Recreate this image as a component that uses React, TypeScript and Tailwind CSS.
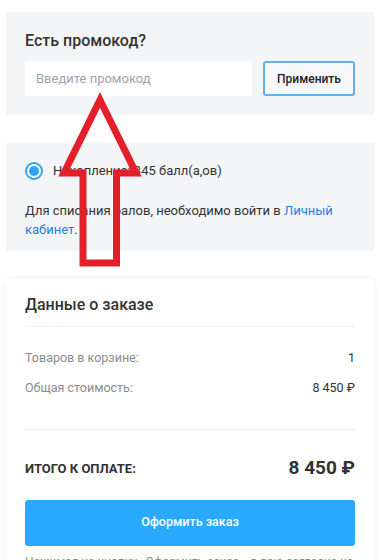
import React from 'react';

export default function App() {
  return (
    <div className="relative min-h-screen bg-white text-[#333] overflow-hidden" style={{ fontFamily: 'Roboto, "Liberation Sans", sans-serif' }}>
      <div className="px-[6px] pt-[12px]">
        {/* Promo code */}
        <div className="bg-[#f4f5f7] px-[19px] pt-[19px] pb-[19px]">
          <h3 className="text-[16px] leading-[20px] font-medium text-[#333]">Есть промокод?</h3>
          <div className="mt-[10px] flex gap-[11px]">
            <input
              className="h-[35px] w-[227px] bg-white rounded-[2px] px-[11px] text-[13px] outline-none placeholder:text-[#a0a4ab]"
              placeholder="Введите промокод"
            />
            <button className="h-[35px] w-[92px] rounded-[3px] border-2 border-[#62b2ea] bg-[#f7f8fa] text-[12px] font-medium text-[#222]">
              Применить
            </button>
          </div>
        </div>

        {/* Bonuses */}
        <div className="mt-[28px] bg-[#f4f5f7] px-[19px] pt-[19px] pb-[12px]">
          <label className="flex items-center gap-[10px]">
            <span className="flex h-[18px] w-[18px] items-center justify-center rounded-full border-2 border-[#2ea6f5] bg-white">
              <span className="h-[10px] w-[10px] rounded-full bg-[#2ea6f5]" />
            </span>
            <span className="text-[13px] leading-[18px] text-[#333]">Накопление: 345 балл(а,ов)</span>
          </label>
          <p className="mt-[21px] text-[13px] leading-[19px] text-[#333]">
            Для списания балов, необходимо войти в <a className="text-[#1e7ee6]">Личный кабинет</a>.
          </p>
        </div>

        {/* Order summary */}
        <div className="mt-[28px] rounded-[4px] bg-white shadow-[0_0_8px_rgba(0,0,0,0.07)] px-[19px] pt-[16px] pb-[20px]">
          <h3 className="text-[16px] leading-[20px] font-medium text-[#333]">Данные о заказе</h3>
          <div className="mt-[11px] border-t border-[#eceef1]" />
          <div className="mt-[22px] flex justify-between text-[12.5px] leading-[18px]">
            <span className="text-[#8c8c8c]">Товаров в корзине:</span>
            <span className="text-[#333]">1</span>
          </div>
          <div className="mt-[12px] flex justify-between text-[12.5px] leading-[18px]">
            <span className="text-[#8c8c8c]">Общая стоимость:</span>
            <span className="text-[#333]">8 450 ₽</span>
          </div>
          <div className="mt-[32px] border-t border-[#eceef1]" />
          <div className="mt-[24px] flex items-center justify-between">
            <span className="text-[13px] font-bold uppercase text-[#333]">Итого к оплате:</span>
            <span className="text-[19px] font-bold text-[#333]">8 450 ₽</span>
          </div>
          <button className="mt-[17px] h-[46px] w-full rounded-[3px] bg-[#29a9ff] text-[12.5px] font-medium text-white">
            Оформить заказ
          </button>
          <p className="mt-[8px] text-[12px] leading-[16px] text-[#8c8c8c]">
            Нажимая на кнопку «Оформить заказ», я даю согласие на обработку персональных данных
          </p>
        </div>
      </div>

      {/* annotation arrow */}
      <svg className="pointer-events-none absolute left-0 top-0" width="380" height="560" viewBox="0 0 380 560">
        <polygon
          points="100,100 136,173 116.5,173 116.5,263 83,263 83,173 64,173"
          fill="none"
          stroke="#e3202a"
          strokeWidth="7"
          strokeLinejoin="miter"
          strokeMiterlimit="10"
        />
      </svg>
    </div>
  );
}
